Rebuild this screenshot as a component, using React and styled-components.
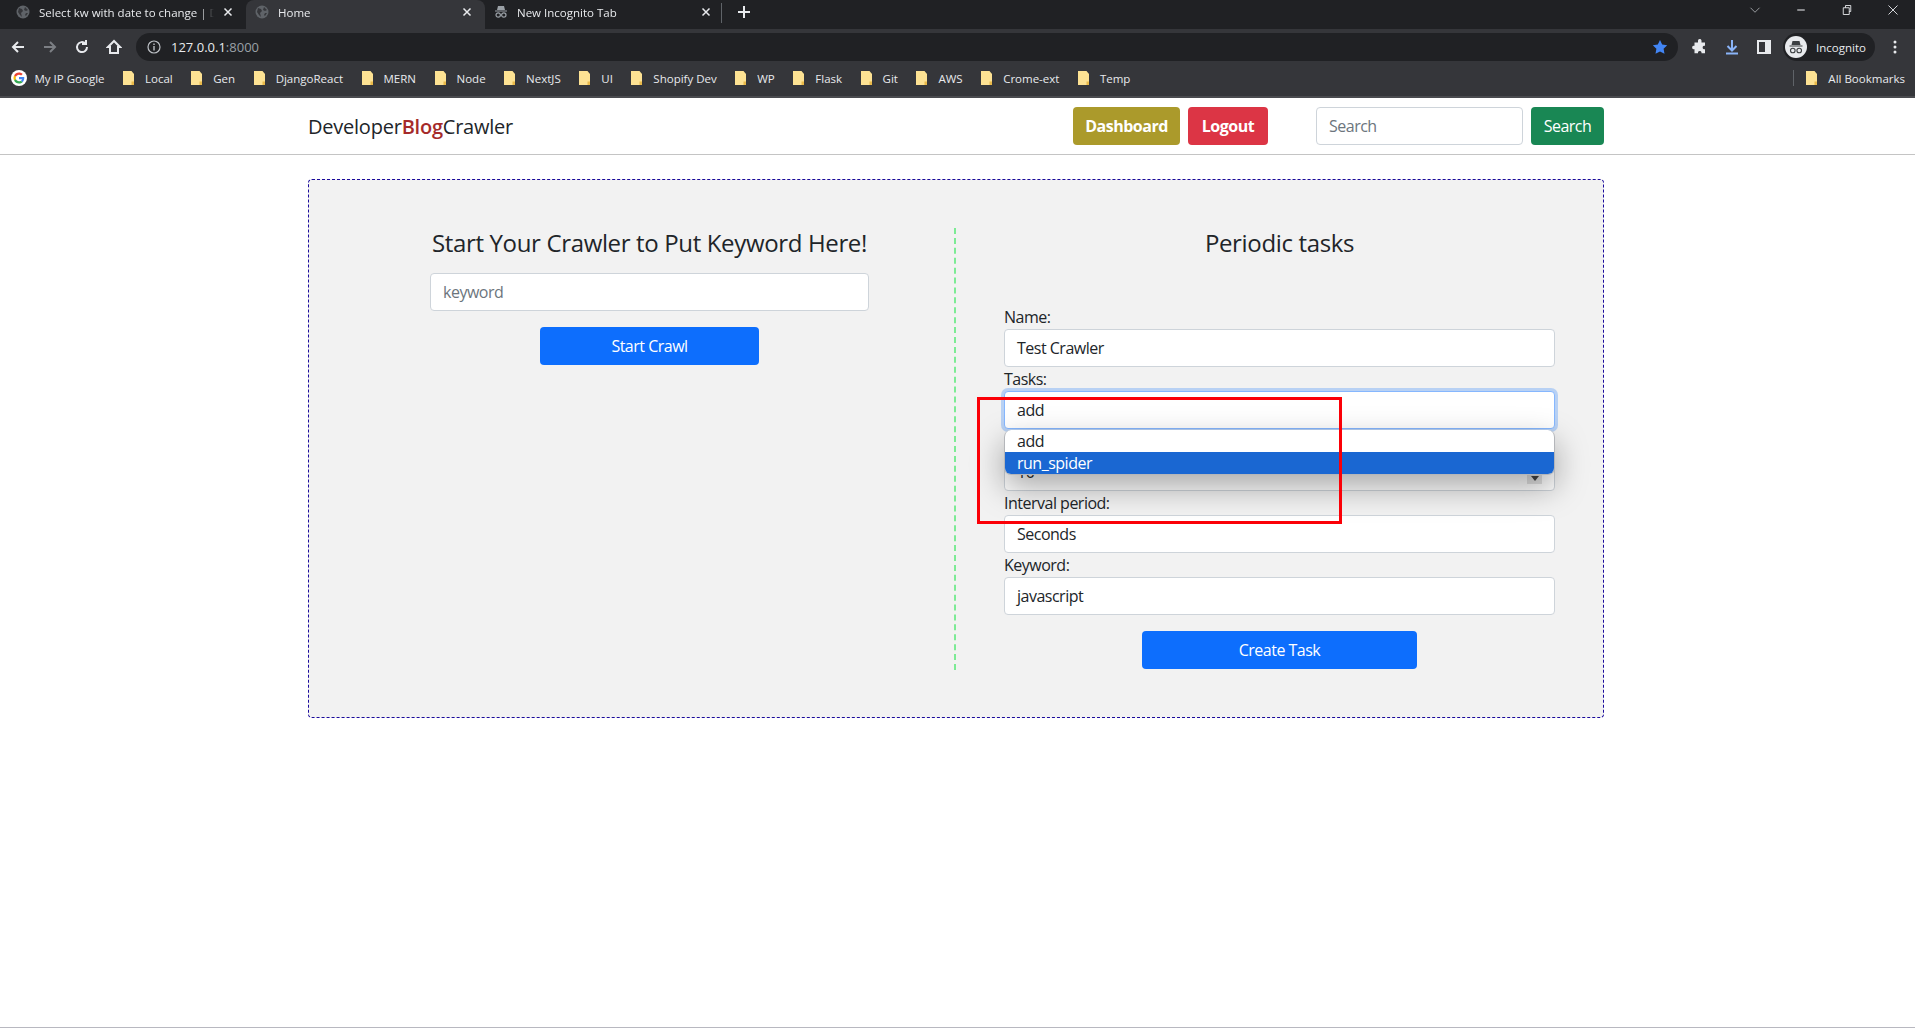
import React from 'react';
import styled, { createGlobalStyle } from 'styled-components';

const GlobalStyle = createGlobalStyle`
  html, body { margin: 0; padding: 0; background: #fff; }
  body { font-family: "Open Sans", "Noto Sans", sans-serif; color: #212529; }
  * { box-sizing: border-box; }
`;

const Page = styled.div`
  height: 1028px;
  overflow: hidden;
  display: flex;
  flex-direction: column;
  border-bottom: 1px solid #b8b8c0;
`;

/* browser chrome */
const Chrome = styled.div`
  height: 98px;
  flex: none;
  display: flex;
  flex-direction: column;
  background: #35363a;
  color: #e8eaed;
  font-size: 11.5px;
  border-bottom: 2px solid #4a4b4f;
`;
const TabStrip = styled.div`
  height: 29px;
  flex: none;
  background: #202124;
  display: flex;
  align-items: flex-end;
  padding-left: 7px;
`;
const Tab = styled.div`
  width: 239px;
  height: 29px;
  padding: 0 13px 5px 9px;
  border-radius: 8px 8px 0 0;
  display: flex;
  align-items: center;
  gap: 9px;
  background: ${p => (p.$active ? '#35363a' : 'transparent')};
  span {
    flex: 1;
    white-space: nowrap;
    overflow: hidden;
    mask-image: linear-gradient(to right, #000 92%, transparent);
  }
`;
const TabDivider = styled.div`
  width: 1px;
  height: 20px;
  margin: 0 14px 6px -3px;
  background: #5f6368;
`;
const NewTab = styled.div`
  margin-bottom: 7px;
  height: 20px;
  display: flex;
  align-items: center;
`;
const WindowControls = styled.div`
  margin-left: auto;
  align-self: flex-start;
  height: 20px;
  display: flex;
  align-items: center;
  gap: 34px;
  padding-right: 16px;
`;
const Toolbar = styled.div`
  height: 36px;
  flex: none;
  display: flex;
  align-items: center;
  padding: 0 18px 0 10px;
`;
const NavIcons = styled.div`
  display: flex;
  align-items: center;
  gap: 16px;
  margin-right: 14px;
`;
const Omnibox = styled.div`
  flex: 1;
  height: 28px;
  border-radius: 14px;
  background: #202124;
  display: flex;
  align-items: center;
  padding: 0 10px 0 11px;
  gap: 10px;
  font-size: 13px;
  i { font-style: normal; color: #9aa0a6; }
`;
const Star = styled.div`
  margin-left: auto;
  display: flex;
`;
const ToolIcons = styled.div`
  display: flex;
  align-items: center;
  gap: 16px;
  margin-left: 14px;
`;
const Profile = styled.div`
  height: 28px;
  width: 92px;
  padding-left: 2px;
  margin: 0 2px 0 -5px;
  border-radius: 14px;
  background: #202124;
  display: flex;
  align-items: center;
  gap: 9px;
`;
const BookmarkBar = styled.div`
  height: 31px;
  flex: none;
  display: flex;
  align-items: center;
  padding: 0 10px 5px 10.5px;
`;
const Bookmark = styled.div`
  display: flex;
  align-items: center;
  gap: ${p => p.$gap || 11}px;
  margin-right: 18.5px;
  white-space: nowrap;
`;
const AllBookmarks = styled(Bookmark)`
  margin-right: 0;
`;
const BarSeparator = styled.div`
  width: 1px;
  height: 16px;
  background: #5f6368;
  margin-left: auto;
  margin-right: 12px;
`;

/* site */
const Navbar = styled.header`
  height: 57px;
  flex: none;
  padding-right: 3px;
  border-bottom: 1px solid #c4c4c4;
  display: flex;
  justify-content: center;
  align-items: center;
`;
const NavInner = styled.div`
  width: 1296px;
  display: flex;
  align-items: center;
`;
const Brand = styled.div`
  font-size: 20px;
  font-weight: 500;
  letter-spacing: -0.23px;
  span { color: #a52a2a; font-weight: 600; }
`;
const NavButtons = styled.div`
  margin-left: auto;
  display: flex;
  gap: 8px;
`;
const Btn = styled.div`
  height: 38px;
  width: ${p => p.$width};
  border-radius: 4px;
  background: ${p => p.$bg};
  color: #fff;
  font-size: 16px;
  letter-spacing: -0.5px;
  font-weight: ${p => (p.$bold ? 700 : 400)};
  display: flex;
  align-items: center;
  justify-content: center;
  white-space: nowrap;
`;
const NavSearch = styled.form`
  display: flex;
  gap: 8px;
  margin-left: 48px;
`;
const Field = styled.div`
  height: 38px;
  width: ${p => p.$width || '100%'};
  padding: 0 12px;
  background: #fff;
  border: 1px solid #ced4da;
  border-radius: 4px;
  display: flex;
  align-items: center;
  font-size: 16px;
  letter-spacing: -0.5px;
  color: ${p => (p.$placeholder ? '#6c757d' : '#212529')};
  white-space: nowrap;
`;
const Main = styled.main`
  display: flex;
  justify-content: center;
  padding: 24px 3px 0 0;
`;
const Card = styled.section`
  width: 1296px;
  height: 539px;
  padding: 48px 0 47px;
  background: #f2f2f2;
  border: 1px dashed #1a0a9c;
  border-radius: 4px;
  display: grid;
  grid-template-columns: 647px 1fr;
`;
const LeftCol = styled.div`
  padding-left: 36px;
  border-right: 2px dashed #7deb95;
  display: flex;
  flex-direction: column;
  align-items: center;
`;
const RightCol = styled.div`
  padding: 0 48px;
  display: flex;
  flex-direction: column;
  align-items: center;
`;
const Heading = styled.h2`
  margin: 0;
  font-size: 24px;
  line-height: 30px;
  font-weight: 500;
  letter-spacing: -0.35px;
  text-align: center;
`;
const KeywordWrap = styled.div`
  width: 439px;
  margin: 15px 0 16px;
`;
const Form = styled.div`
  width: 100%;
  margin-top: 47px;
`;
const Row = styled.div`
  position: relative;
`;
const Label = styled.div`
  font-size: 16px;
  line-height: 24px;
  height: 24px;
  letter-spacing: -0.5px;
`;
const FocusField = styled(Field)`
  border-color: #86b7fe;
  box-shadow: 0 0 0 3px rgba(13, 110, 253, 0.25);
`;
const Arrow = styled.div`
  width: 15px;
  height: 17px;
  margin-left: auto;
  margin-top: 6px;
  padding-bottom: 3px;
  background: #e3e3e3;
  display: flex;
  align-items: flex-end;
  justify-content: center;
  &::after {
    content: '';
    border: 4px solid transparent;
    border-top: 5px solid #444;
    border-bottom: 0;
  }
`;
const Dropdown = styled.div`
  position: absolute;
  top: 63px;
  left: 0;
  right: 0;
  height: 45px;
  background: #fff;
  border: 1px solid #b4b6ba;
  border-top: 0;
  border-radius: 7px;
  overflow: hidden;
  box-shadow: 0 12px 32px rgba(0, 0, 0, 0.35);
  z-index: 2;
  font-size: 16px;
  letter-spacing: -0.5px;
`;
const Option = styled.div`
  height: 22px;
  line-height: 22px;
  padding: 0 12px;
  background: ${p => (p.$selected ? '#1a67d2' : 'transparent')};
  color: ${p => (p.$selected ? '#fff' : '#212529')};
`;
const Highlight = styled.div`
  position: absolute;
  top: 30px;
  left: -27px;
  width: 365px;
  height: 127px;
  border: 3px solid #fb0007;
  z-index: 3;
`;
const Submit = styled(Btn)`
  margin: 16px auto 0;
`;

const IconSvg = styled.svg`
  display: block;
  flex: none;
`;

const Globe = () => (
  <IconSvg width="14" height="14" viewBox="0 0 14 14">
    <circle cx="7" cy="7" r="6.5" fill="#5f6368" />
    <path d="M3 3l3 1 1 2-2 2 1 4-2-2-2-3zM9 2l3 3-2 1-2-1zM10 8l2 0-2 3-1-1z" fill="#35363a" />
  </IconSvg>
);
const Spy = () => (
  <IconSvg width="14" height="14" viewBox="0 0 14 14">
    <path d="M4 1h6l1 4H3zM1 5.500h12v1H1z" fill="#9aa0a6" />
    <circle cx="4.200" cy="10" r="2.200" fill="none" stroke="#9aa0a6" strokeWidth="1.200" />
    <circle cx="9.800" cy="10" r="2.200" fill="none" stroke="#9aa0a6" strokeWidth="1.200" />
  </IconSvg>
);
const Close = () => (
  <IconSvg width="10" height="10" viewBox="0 0 10 10">
    <path d="M1.500 1.500l7 7M8.500 1.500l-7 7" stroke="#e8eaed" strokeWidth="1.500" />
  </IconSvg>
);
const Folder = () => (
  <IconSvg width="11" height="14" viewBox="0 0 11 14">
    <path d="M0 0h8.500L11 3v11H0z" fill="#fde293" />
    <path d="M8.500 10.500H11V14H8.500z" fill="#e9b949" />
  </IconSvg>
);
const GoogleG = () => (
  <IconSvg width="16" height="16" viewBox="0 0 64 64">
    <circle cx="32" cy="32" r="32" fill="#fff" />
    <g transform="translate(10 10) scale(0.917)">
      <path fill="#ea4335" d="M24 9.500c3.500 0 6.700 1.200 9.200 3.600l6.900-6.900C35.900 2.400 30.500 0 24 0 14.600 0 6.500 5.400 2.600 13.200l8 6.200C12.500 13.600 17.800 9.500 24 9.500z" />
      <path fill="#4285f4" d="M47 24.500c0-1.600-.1-3.100-.4-4.500H24v9h12.900c-.6 3-2.200 5.500-4.800 7.200l7.700 6c4.500-4.200 7.200-10.300 7.200-17.700z" />
      <path fill="#fbbc05" d="M10.600 28.600c-.5-1.400-.8-3-.8-4.600s.3-3.200.8-4.600l-8-6.200C.9 16.500 0 20.100 0 24s.9 7.500 2.600 10.800z" />
      <path fill="#34a853" d="M24 48c6.500 0 11.900-2.100 15.900-5.800l-7.700-6c-2.200 1.400-4.900 2.300-8.200 2.300-6.200 0-11.500-4.200-13.400-9.800l-8 6.200C6.500 42.600 14.600 48 24 48z" />
    </g>
  </IconSvg>
);
const Stroke = ({ d, color = '#e8eaed', size = 16, width = 2 }) => (
  <IconSvg width={size} height={size} viewBox="0 0 16 16" fill="none">
    <path d={d} stroke={color} strokeWidth={width} />
  </IconSvg>
);

const bookmarks = ['Local', 'Gen', 'DjangoReact', 'MERN', 'Node', 'NextJS', 'UI', 'Shopify Dev', 'WP', 'Flask', 'Git', 'AWS', 'Crome-ext', 'Temp'];

const BrowserChrome = () => (
  <Chrome>
    <TabStrip>
      <Tab><Globe /><span>Select kw with date to change | D</span><Close /></Tab>
      <Tab $active><Globe /><span>Home</span><Close /></Tab>
      <Tab><Spy /><span>New Incognito Tab</span><Close /></Tab>
      <TabDivider />
      <NewTab><Stroke d="M8 2v12M2 8h12" /></NewTab>
      <WindowControls>
        <Stroke size={12} width={1} color="#bdc1c6" d="M2 5l6 6 6-6" />
        <Stroke size={12} width={1.4} d="M3 8h10" />
        <Stroke size={12} width={1.2} d="M3 5h8v9H3zM6 5V2h7v8h-2" />
        <Stroke size={12} width={1.2} d="M2 2l12 12M14 2L2 14" />
      </WindowControls>
    </TabStrip>
    <Toolbar>
      <NavIcons>
        <Stroke d="M14 8H3M8 3L3 8l5 5" />
        <Stroke color="#7c7f84" d="M2 8h11M8 3l5 5-5 5" />
        <Stroke d="M13 8a5 5 0 1 1-1.500-3.500M12 1v4H8" />
        <Stroke d="M8 2L2 8h2v6h8V8h2z" />
      </NavIcons>
      <Omnibox>
        <IconSvg width="14" height="14" viewBox="0 0 14 14" fill="none">
          <circle cx="7" cy="7" r="6" stroke="#bdc1c6" strokeWidth="1.200" />
          <path d="M7 6v4.500M7 3.500v1.500" stroke="#bdc1c6" strokeWidth="1.400" />
        </IconSvg>
        <span>127.0.0.1<i>:8000</i></span>
        <Star>
          <IconSvg width="16" height="16" viewBox="0 0 16 16">
            <path d="M8 1l2.200 4.600 5 .7-3.600 3.500.9 5L8 12.400 3.500 14.800l.9-5L.8 6.300l5-.7z" fill="#4285f4" />
          </IconSvg>
        </Star>
      </Omnibox>
      <ToolIcons>
        <IconSvg width="16" height="16" viewBox="0 0 16 16">
          <path d="M6 1.500a1.800 1.800 0 0 1 3.500 0V3.500H13v3.300h-1a1.800 1.800 0 0 0 0 3.500h1v4H9.500v-1a1.800 1.800 0 0 0-3.500 0v1H2.500v-4H1.500a1.800 1.800 0 0 1 0-3.500h1V3.500H6z" fill="#e8eaed" />
        </IconSvg>
        <Stroke color="#8ab4f8" d="M8 1v10M3.500 7L8 11.500 12.500 7M2 14.500h12" />
        <IconSvg width="16" height="16" viewBox="0 0 16 16" fill="none">
          <path d="M2 2h12v12H2z" stroke="#e8eaed" strokeWidth="2" />
          <path d="M9 2h5v12H9z" fill="#e8eaed" />
        </IconSvg>
        <Profile>
          <IconSvg width="22" height="22" viewBox="0 0 22 22">
            <circle cx="11" cy="11" r="11" fill="#e8eaed" />
            <path d="M7.500 5h7l1 4h-9zM4.500 9.500h13v1h-13z" fill="#3c4043" />
            <circle cx="7.800" cy="14.500" r="2.300" fill="none" stroke="#3c4043" strokeWidth="1.100" />
            <circle cx="14.200" cy="14.500" r="2.300" fill="none" stroke="#3c4043" strokeWidth="1.100" />
          </IconSvg>
          <span>Incognito</span>
        </Profile>
        <IconSvg width="4" height="14" viewBox="0 0 4 14">
          <circle cx="2" cy="2" r="1.500" fill="#e8eaed" />
          <circle cx="2" cy="7" r="1.500" fill="#e8eaed" />
          <circle cx="2" cy="12" r="1.500" fill="#e8eaed" />
        </IconSvg>
      </ToolIcons>
    </Toolbar>
    <BookmarkBar>
      <Bookmark $gap={8}><GoogleG /><span>My IP Google</span></Bookmark>
      {bookmarks.map(name => (
        <Bookmark key={name}><Folder /><span>{name}</span></Bookmark>
      ))}
      <BarSeparator />
      <AllBookmarks><Folder /><span>All Bookmarks</span></AllBookmarks>
    </BookmarkBar>
  </Chrome>
);

export default function App() {
  return (
    <Page>
      <GlobalStyle />
      <BrowserChrome />
      <Navbar>
        <NavInner>
          <Brand>Developer<span>Blog</span>Crawler</Brand>
          <NavButtons>
            <Btn $bg="#ab9a2b" $bold $width="107px">Dashboard</Btn>
            <Btn $bg="#dc3545" $bold $width="80px">Logout</Btn>
          </NavButtons>
          <NavSearch>
            <Field $width="207px" $placeholder>Search</Field>
            <Btn $bg="#198754" $width="73px">Search</Btn>
          </NavSearch>
        </NavInner>
      </Navbar>
      <Main>
        <Card>
          <LeftCol>
            <Heading>Start Your Crawler to Put Keyword Here!</Heading>
            <KeywordWrap>
              <Field $placeholder>keyword</Field>
            </KeywordWrap>
            <Btn $bg="#0d6efd" $width="219px">Start Crawl</Btn>
          </LeftCol>
          <RightCol>
            <Heading>Periodic tasks</Heading>
            <Form>
              <Row>
                <Label>Name:</Label>
                <Field>Test Crawler</Field>
              </Row>
              <Row>
                <Label>Tasks:</Label>
                <FocusField>add</FocusField>
                <Dropdown>
                  <Option>add</Option>
                  <Option $selected>run_spider</Option>
                </Dropdown>
                <Highlight />
              </Row>
              <Row>
                <Label>Interval:</Label>
                <Field>10<Arrow /></Field>
              </Row>
              <Row>
                <Label>Interval period:</Label>
                <Field>Seconds</Field>
              </Row>
              <Row>
                <Label>Keyword:</Label>
                <Field>javascript</Field>
              </Row>
              <Submit $bg="#0d6efd" $width="275px">Create Task</Submit>
            </Form>
          </RightCol>
        </Card>
      </Main>
    </Page>
  );
}
